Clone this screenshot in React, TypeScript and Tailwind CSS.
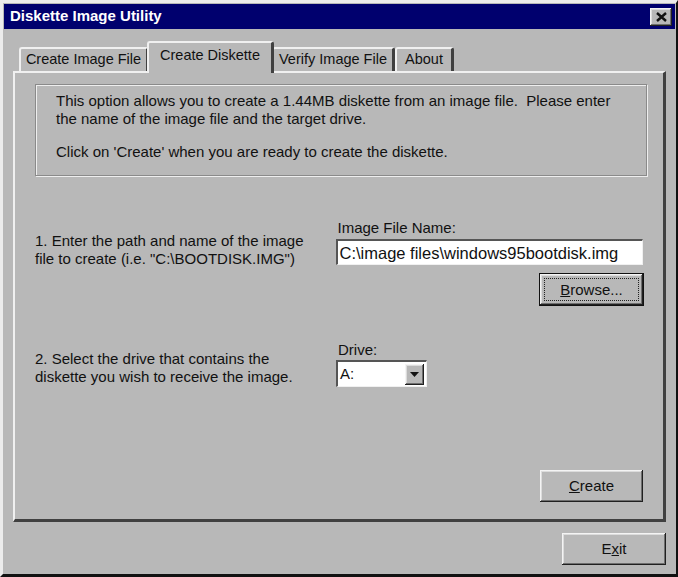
const FONT = { fontFamily: "'Liberation Sans', Arial, sans-serif" };

const raised =
  "bg-[#b8b8b8] shadow-[inset_-1px_-1px_0_#202020,inset_1px_1px_0_#f4f4f4,inset_-2px_-2px_0_#6e6e6e,inset_2px_2px_0_#dcdcdc]";

function Tab({
  label,
  active,
  className = "",
}: {
  label: string;
  active?: boolean;
  className?: string;
}) {
  return (
    <div
      className={`flex items-center justify-center rounded-t-[3px] border-t-2 border-l-2 border-r-[3px] border-t-[#f0f0f0] border-l-[#f0f0f0] border-r-[#404040] bg-[#b8b8b8] text-[14.5px] text-[#111] ${
        active
          ? "relative z-10 -mx-[2px] -mb-[2px] h-[32px] pb-[4px]"
          : "h-[24px]"
      } ${className}`}
    >
      {label}
    </div>
  );
}

function Button({
  children,
  className = "",
  focused,
}: {
  children: React.ReactNode;
  className?: string;
  focused?: boolean;
}) {
  return (
    <button
      type="button"
      className={`flex items-center justify-center text-[15px] text-[#111] ${raised} ${
        focused ? "outline-[1px] outline-[#111]" : ""
      } ${className}`}
    >
      {focused ? (
        <span className="flex h-[calc(100%-8px)] w-[calc(100%-8px)] items-center justify-center border border-dotted border-[#222]">
          {children}
        </span>
      ) : (
        children
      )}
    </button>
  );
}

export default function App() {
  return (
    <div
      className="flex h-[577px] w-[678px] flex-col border-t-[3px] border-l-[3px] border-r-[2px] border-b-[3px] border-t-[#ececec] border-l-[#ececec] border-r-[#111] border-b-[#111] bg-[#b8b8b8] px-[1px] pt-[1px]"
      style={FONT}
    >
      {/* Title bar */}
      <div className="flex h-[25px] shrink-0 items-center justify-between bg-[#00006e] pl-[6px] pr-[3px]">
        <span className="text-[15px] font-bold text-white">Diskette Image Utility</span>
        <div className={`flex h-[18px] w-[22px] items-center justify-center ${raised}`}>
          <svg width="11" height="10" viewBox="0 0 11 10">
            <path d="M1 1 L10 9 M10 1 L1 9" stroke="#111" strokeWidth="2.4" />
          </svg>
        </div>
      </div>

      {/* Tabs */}
      <div className="mt-[12px] flex items-end pl-[15px]">
        <Tab label="Create Image File" className="w-[130px]" />
        <Tab label="Create Diskette" active className="w-[127px]" />
        <Tab label="Verify Image File" className="w-[123px]" />
        <Tab label="About" className="w-[59px]" />
      </div>

      {/* Panel */}
      <div className="ml-[9px] mr-[9px] flex h-[451px] flex-col border-t-2 border-l-2 border-r-[3px] border-b-[3px] border-t-[#f0f0f0] border-l-[#f0f0f0] border-r-[#404040] border-b-[#404040] px-[20px] pt-[11px] text-[15px] leading-[18px] text-[#111]">
        <div className="w-[612px] border border-[#8a8a8a] px-[20px] pt-[7px] pb-[14px] shadow-[inset_1px_1px_0_#eee,1px_1px_0_#eee]">
          <p>
            This option allows you to create a 1.44MB diskette from an image file.&nbsp; Please enter
            <br />
            the name of the image file and the target drive.
          </p>
          <p className="mt-[15px]">Click on 'Create' when you are ready to create the diskette.</p>
        </div>

        {/* Step 1 */}
        <div className="mt-[43px] flex">
          <div className="flex w-[301px] items-center pb-[32px] pt-[8px]">
            <p>
              1. Enter the path and name of the image
              <br />
              file to create (i.e. "C:\BOOTDISK.IMG")
            </p>
          </div>
          <div className="flex w-[308px] flex-col">
            <span className="pl-[2px]">Image File Name:</span>
            <div className="mt-[2px] flex h-[26px] items-center border-t-2 border-l-2 border-r border-b border-t-[#555] border-l-[#555] border-r-[#f0f0f0] border-b-[#f0f0f0] bg-white pl-[2px] text-[16.5px]">
              C:\image files\windows95bootdisk.img
            </div>
            <Button focused className="mt-[9px] h-[31px] w-[103px] self-end">
              <span>
                <u>B</u>rowse...
              </span>
            </Button>
          </div>
        </div>

        {/* Step 2 */}
        <div className="mt-[36px] flex">
          <div className="flex w-[301px] items-end pb-[1px]">
            <p>
              2. Select the drive that contains the
              <br />
              diskette you wish to receive the image.
            </p>
          </div>
          <div className="flex flex-col">
            <span className="pl-[2px]">Drive:</span>
            <div className="mt-[1px] flex h-[27px] w-[91px] items-center border-t-2 border-l-2 border-r border-b border-t-[#555] border-l-[#555] border-r-[#f0f0f0] border-b-[#f0f0f0] bg-white pl-[2px] pr-[2px]">
              <span className="flex-1 text-[15px]">A:</span>
              <div className={`flex h-[21px] w-[19px] items-center justify-center ${raised}`}>
                <svg width="9" height="5" viewBox="0 0 9 5">
                  <path d="M0 0 H9 L4.5 5 Z" fill="#111" />
                </svg>
              </div>
            </div>
          </div>
        </div>

        {/* Create */}
        <div className="mt-auto mb-[17px] flex justify-end">
          <Button className="h-[32px] w-[103px]">
            <span>
              <u>C</u>reate
            </span>
          </Button>
        </div>
      </div>

      {/* Exit */}
      <div className="mt-[11px] flex justify-end pr-[9px]">
        <Button className="h-[32px] w-[104px]">
          <span>
            E<u>x</u>it
          </span>
        </Button>
      </div>
    </div>
  );
}
